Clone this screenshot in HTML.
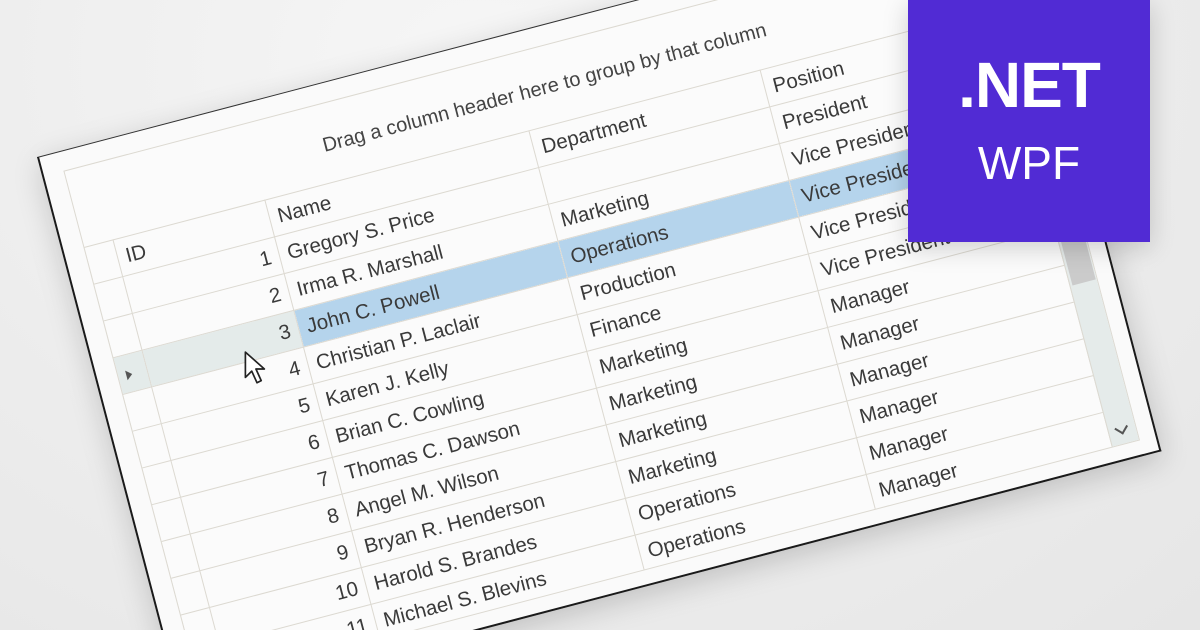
<!DOCTYPE html>
<html><head><meta charset="utf-8">
<style>
html{margin:0;padding:0;width:1200px;height:630px;overflow:hidden}
body{margin:0;padding:0;width:1200px;height:630px;overflow:hidden;position:relative;background:radial-gradient(ellipse at 40% 10%,#f6f6f6 0%,#ececec 60%,#e6e6e6 100%);font-family:"Segoe UI","Liberation Sans",sans-serif;color:#3a3a3a}
.clip{position:absolute;left:0;top:0;width:1200px;height:630px;overflow:hidden}
.win{position:absolute;left:37px;top:157px;width:1013px;height:570px;background:#fafafa;border-left:2px solid #1a1a1a;border-top:1px solid #333;border-bottom:2px solid #1a1a1a;border-right:2px solid #1a1a1a;box-sizing:border-box;transform:rotate(-14.7deg);transform-origin:0 0;box-shadow:0 8px 30px rgba(0,0,0,.18)}
.frame{position:absolute;left:20px;top:19px;width:973px;height:534px;border:1.5px solid #dcd9d1;box-sizing:border-box;overflow:hidden;background:#fbfbfb}
.drag{position:absolute;left:0;width:100%;top:30px;text-align:center;font-size:20px;color:#444}
table{position:absolute;left:-1px;top:78px;border-collapse:collapse;table-layout:fixed;font-size:20.5px}
tr{height:38px}
td{border:1.5px solid #dcd9d1;height:38px;line-height:24px;padding:0 8px;white-space:nowrap;overflow:hidden;box-sizing:border-box}
td.id{text-align:right}
.sel td.c{background:#b5d4ec}
.sel td.ind,.sel td.id{background:#e4ebea}
.sb{position:absolute;left:943px;top:79px;width:30px;height:456px;background:#e5ebea;border-left:1.5px solid #dcd9d1}
.thumb{position:absolute;left:2px;top:0;width:24px;height:287px;background:#cbcbcb}
.chev{position:absolute;left:8px;bottom:14px;width:8px;height:8px;border-right:2px solid #555;border-bottom:2px solid #555;transform:rotate(45deg)}
.tri{display:inline-block;width:0;height:0;border-left:6px solid #555;border-top:5px solid transparent;border-bottom:5px solid transparent}
.badge{position:absolute;left:908px;top:0;width:242px;height:242px;background:#512bd4;color:#fff;text-align:center;box-shadow:0 6px 24px rgba(0,0,0,.18)}
.net{position:absolute;left:0;width:100%;top:50px;font-size:64px;font-weight:bold;letter-spacing:-1px;line-height:70px}
.wpf{position:absolute;left:0;width:100%;top:138px;font-size:46px;line-height:50px;font-weight:300}
.cur{position:absolute;left:243px;top:350px}
</style></head><body>
<div class="clip">
<div class="win">
 <div class="frame">
  <div class="drag">Drag a column header here to group by that column</div>
  <table>
   <colgroup><col style="width:30px"><col style="width:157px"><col style="width:273px"><col style="width:239px"><col style="width:245px"></colgroup>
   <tr><td class="ind"></td><td>ID</td><td>Name</td><td>Department</td><td>Position</td></tr>
   <tr><td class="ind"></td><td class="id">1</td><td class="c">Gregory S. Price</td><td class="c"></td><td class="c">President</td></tr>
   <tr><td class="ind"></td><td class="id">2</td><td class="c">Irma R. Marshall</td><td class="c">Marketing</td><td class="c">Vice President</td></tr>
   <tr class="sel"><td class="ind"><span class="tri"></span></td><td class="id">3</td><td class="c">John C. Powell</td><td class="c">Operations</td><td class="c">Vice President</td></tr>
   <tr><td class="ind"></td><td class="id">4</td><td class="c">Christian P. Laclair</td><td class="c">Production</td><td class="c">Vice President</td></tr>
   <tr><td class="ind"></td><td class="id">5</td><td class="c">Karen J. Kelly</td><td class="c">Finance</td><td class="c">Vice President</td></tr>
   <tr><td class="ind"></td><td class="id">6</td><td class="c">Brian C. Cowling</td><td class="c">Marketing</td><td class="c">Manager</td></tr>
   <tr><td class="ind"></td><td class="id">7</td><td class="c">Thomas C. Dawson</td><td class="c">Marketing</td><td class="c">Manager</td></tr>
   <tr><td class="ind"></td><td class="id">8</td><td class="c">Angel M. Wilson</td><td class="c">Marketing</td><td class="c">Manager</td></tr>
   <tr><td class="ind"></td><td class="id">9</td><td class="c">Bryan R. Henderson</td><td class="c">Marketing</td><td class="c">Manager</td></tr>
   <tr><td class="ind"></td><td class="id">10</td><td class="c">Harold S. Brandes</td><td class="c">Operations</td><td class="c">Manager</td></tr>
   <tr><td class="ind"></td><td class="id">11</td><td class="c">Michael S. Blevins</td><td class="c">Operations</td><td class="c">Manager</td></tr>
   <tr><td class="ind"></td><td class="id">12</td><td class="c">Linda W. Jones</td><td class="c">Finance</td><td class="c">Manager</td></tr>
  </table>
  <div class="sb"><div class="thumb"></div><div class="chev"></div></div>
 </div>
</div>
<svg class="cur" width="28" height="38" viewBox="0 0 26 36"><path d="M2 2 L2 26 L8 20 L13 31 L17 29 L12 18 L20 18 Z" fill="#fff" stroke="#222" stroke-width="1.6" stroke-linejoin="round"/></svg>
<div class="badge"><div class="net">.NET</div><div class="wpf">WPF</div></div>
</div>
</body></html>
